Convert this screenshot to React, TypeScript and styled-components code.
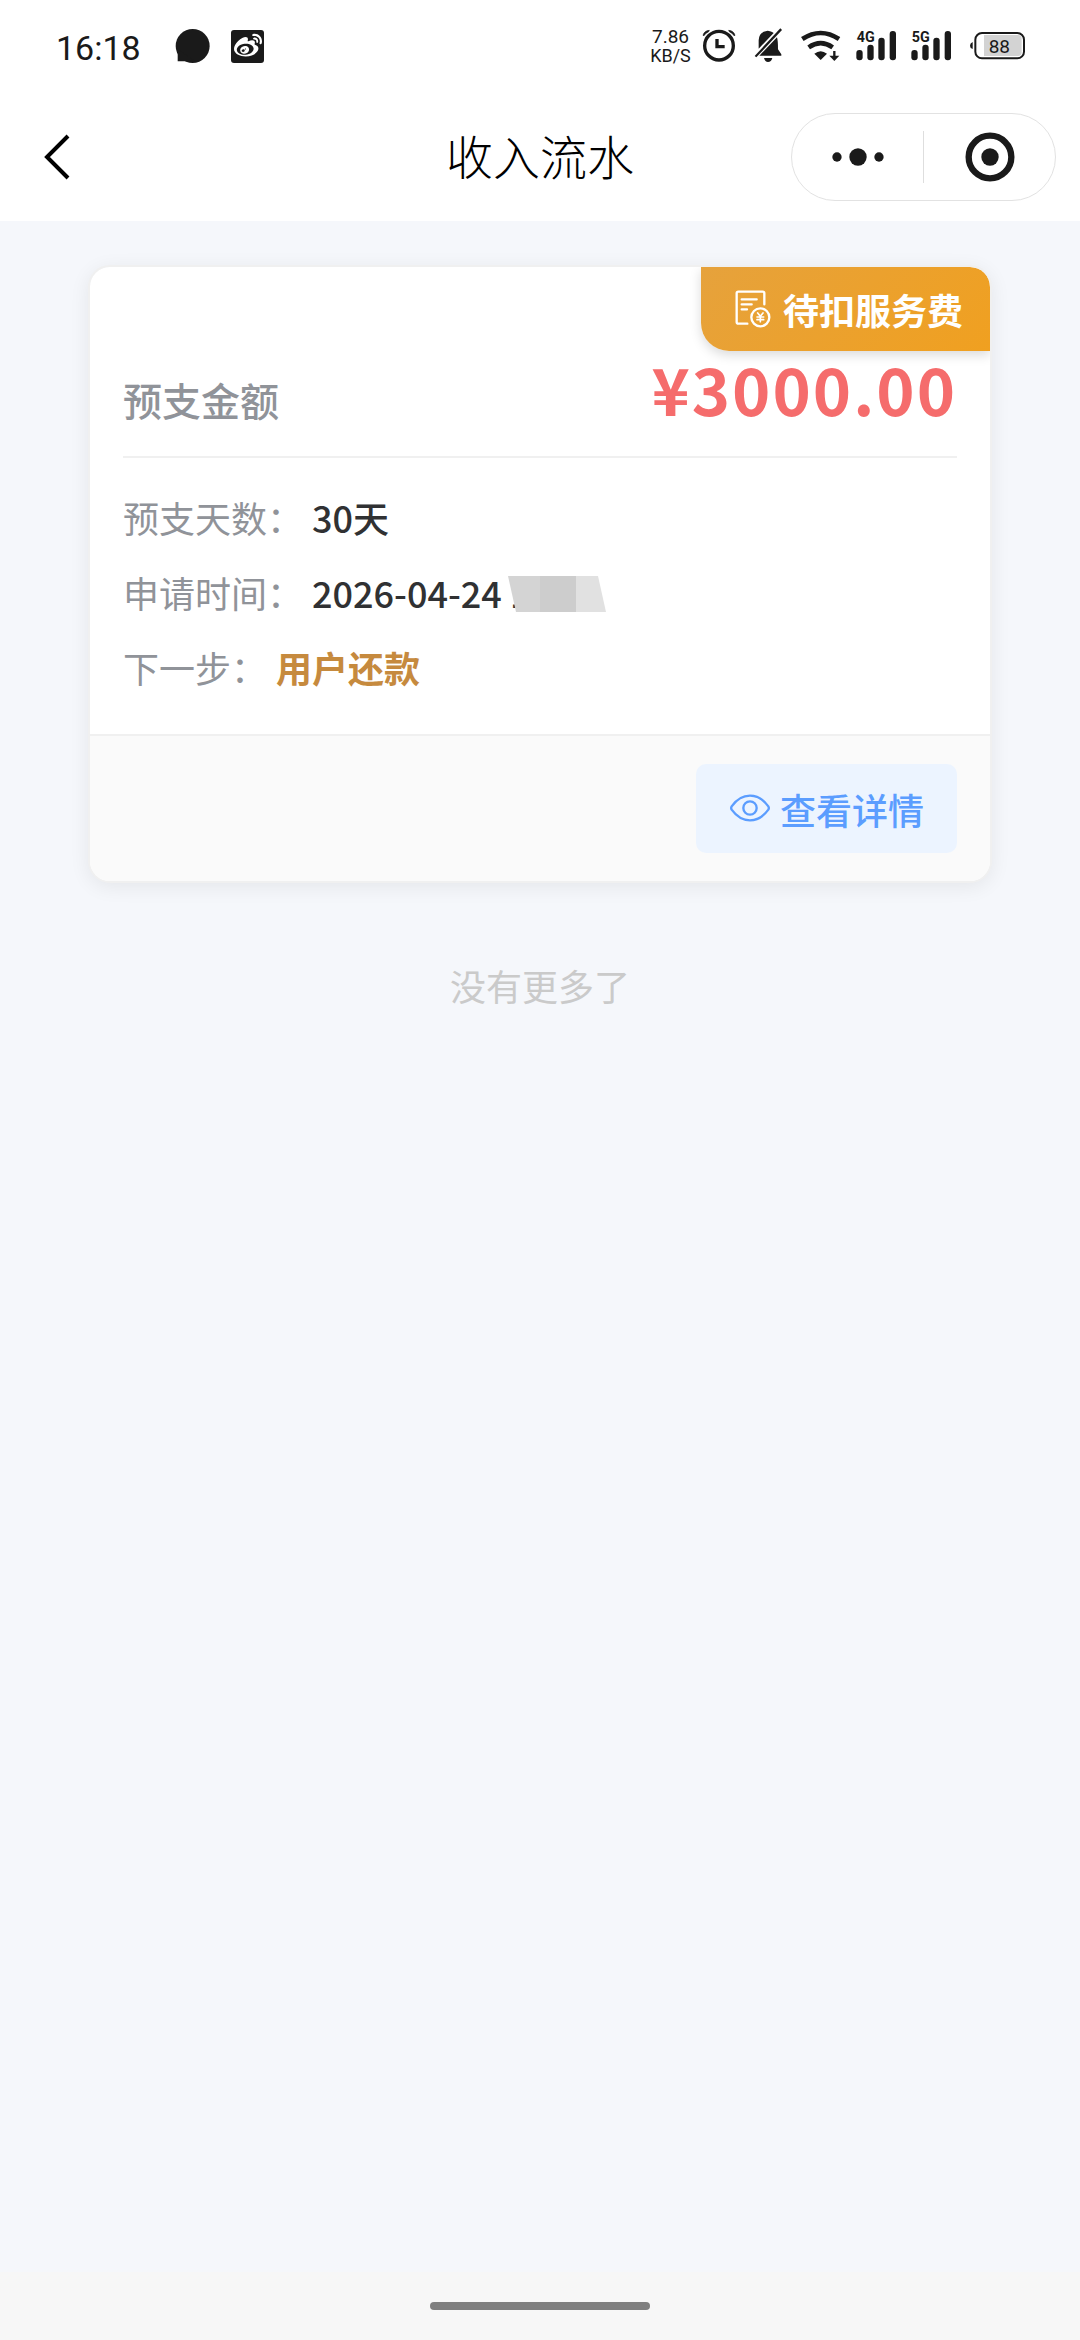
import React from "react";
import styled, { createGlobalStyle } from "styled-components";
import { FaWeibo } from "react-icons/fa";

const ink = "#1a1a1a";
const line = "#f0f0f0";

const GlobalStyle = createGlobalStyle`
  *, *::before, *::after { box-sizing: border-box; }
  body {
    margin: 0;
    background: #f5f7fb;
    font-family: "Noto Sans CJK SC", sans-serif;
  }
  button { font: inherit; border: 0; background: none; padding: 0; cursor: pointer; }
  h1, p, dl, dd, dt { margin: 0; font-weight: inherit; }
  svg { display: block; flex: none; }
`;

const Screen = styled.div`
  display: flex;
  flex-direction: column;
  min-height: 100vh;
`;

const StatusBar = styled.header`
  display: flex;
  justify-content: space-between;
  align-items: center;
  height: 92px;
  padding: 0 54px 0 56px;
  background: #fff;
  color: ${ink};
  font-family: Roboto, sans-serif;
`;

const StatusGroup = styled.div<{ $gap: number }>`
  display: flex;
  align-items: center;
  gap: ${(p) => p.$gap}px;
`;

const Clock = styled.time`
  width: 98px;
  padding-top: 3px;
  font-size: 34px;
  line-height: 40px;
`;

const WeiboTile = styled.span`
  display: grid;
  place-items: center;
  width: 33px;
  height: 33px;
  border-radius: 3px;
  background: ${ink};
  color: #fff;
  font-size: 28px;
`;

const NetSpeed = styled.div`
  width: 43px;
  text-align: center;
  font-size: 18px;
  line-height: 18px;
`;

const SpeedValue = styled.div`
  font-size: 19px;
  line-height: 20px;
`;

const NavBar = styled.nav`
  display: grid;
  grid-template-columns: 1fr auto 1fr;
  align-items: center;
  height: 129px;
  padding: 0 24px;
  background: #fff;
`;

const BackButton = styled.button`
  justify-self: start;
  display: grid;
  place-items: center;
  width: 66px;
  height: 60px;
`;

const Title = styled.h1`
  padding-bottom: 4px;
  font-size: 47px;
  font-weight: 300;
  line-height: 60px;
  color: #000;
`;

const Capsule = styled.div`
  justify-self: end;
  display: flex;
  align-items: center;
  width: 265px;
  height: 88px;
  border: 1px solid #e2e2e2;
  border-radius: 44px;
`;

const CapsuleButton = styled.button`
  flex: 1;
  display: grid;
  place-items: center;
  height: 100%;
`;

const CapsuleRule = styled.span`
  width: 1px;
  height: 52px;
  background: #dedede;
`;

const Content = styled.main`
  flex: 1;
  padding: 44px 88px;
`;

const Card = styled.article`
  position: relative;
  border: 2px solid ${line};
  border-radius: 22px;
  background: #fff;
  background-clip: padding-box;
  box-shadow: 0 4px 20px rgba(0, 0, 0, 0.07);
  overflow: hidden;
`;

const Badge = styled.div`
  position: absolute;
  top: 0;
  right: 0;
  display: flex;
  align-items: center;
  gap: 12px;
  height: 84px;
  padding: 0 27px 0 34px;
  border-radius: 0 20px 0 28px;
  background: linear-gradient(135deg, #e6a23c, #f0a020);
  box-shadow: 0 4px 12px rgba(0, 0, 0, 0.15);
  color: #fff;
  font-size: 36px;
  font-weight: 700;
  line-height: 40px;
`;

const Body = styled.div`
  padding: 0 33px;
`;

const AmountRow = styled.div`
  display: flex;
  justify-content: space-between;
  align-items: baseline;
  padding: 89px 0 32px;
  border-bottom: 2px solid ${line};
`;

const AmountLabel = styled.span`
  font-size: 39px;
  font-weight: 500;
  line-height: 50px;
  color: #909399;
`;

const Amount = styled.span`
  font-size: 65px;
  font-weight: 700;
  line-height: 64px;
  letter-spacing: 2px;
  color: #f56c6c;
`;

const Details = styled.dl`
  display: flex;
  flex-direction: column;
  gap: 25px;
  padding: 34px 0 42px;
`;

const DetailRow = styled.div`
  display: flex;
  gap: 9px;
  font-size: 36px;
  line-height: 50px;
`;

const DetailLabel = styled.dt`
  color: #909399;
`;

const DetailValue = styled.dd<{ $accent?: boolean }>`
  position: relative;
  font-weight: ${(p) => (p.$accent ? 700 : 500)};
  color: ${(p) => (p.$accent ? "#c68a3e" : "#303133")};
`;

const Mosaic = styled.svg`
  position: absolute;
  top: 9px;
  left: 196px;
`;

const CardFooter = styled.footer`
  display: flex;
  justify-content: flex-end;
  padding: 28px 33px;
  border-top: 2px solid ${line};
  background: #fafafa;
`;

const DetailButton = styled.button`
  display: flex;
  align-items: center;
  gap: 9px;
  height: 89px;
  padding: 0 33px;
  border-radius: 10px;
  background: #ecf4ff;
  color: #5b9dff;
  font-size: 36px;
  font-weight: 500;
  line-height: 40px;
`;

const EndNote = styled.p`
  padding: 77px 0;
  text-align: center;
  font-size: 36px;
  line-height: 50px;
  color: #cacaca;
`;

const HomeArea = styled.footer`
  display: grid;
  place-items: center;
  height: 68px;
  background: #f7f7f7;
`;

const HomeBar = styled.span`
  width: 220px;
  height: 8px;
  border-radius: 4px;
  background: #7f7f7f;
`;

function BubbleIcon() {
  return (
    <svg width="35" height="35" viewBox="0 0 105 105" fill={ink} aria-hidden="true">
      <circle cx="53" cy="51" r="51" />
      <path d="M8 60V97H60Z" />
    </svg>
  );
}

function AlarmIcon() {
  return (
    <svg width="35" height="40" viewBox="213 78 105 120" fill="none" stroke={ink} aria-hidden="true">
      <circle cx="264" cy="137" r="43" strokeWidth="10" />
      <path d="M258 117V140H281" strokeWidth="10" />
      <path d="M216 106Q220 92 235 91L233 95Q223 99 219 107ZM312 106Q308 92 293 91L295 95Q305 99 309 107Z" fill={ink} strokeWidth="2" />
    </svg>
  );
}

function MutedBellIcon() {
  return (
    <svg width="41" height="40" viewBox="348 78 123 120" fill={ink} aria-hidden="true">
      <path d="M371 168L448 85L453 90L376 172Z" />
      <path d="M383 146V121Q384 98 404 94Q410 90 417 94Q424 96 428 99Z" />
      <path d="M438 112Q441 121 441 148L451 163V167H385Z" />
      <path d="M399 174H424Q421 186 411 186Q402 186 399 174Z" />
    </svg>
  );
}

function WifiIcon() {
  return (
    <svg width="45" height="40" viewBox="501 78 135 120" fill="none" stroke={ink} aria-hidden="true">
      <path d="M514 117Q569 81 624 117" strokeWidth="14" />
      <path d="M533 142Q569 117 605 142" strokeWidth="14" />
      <path d="M550 161Q569 146 588 161L569 180Z" fill={ink} stroke="none" />
      <path d="M610 153V170" strokeWidth="7" />
      <path d="M595 167H625L610 183Z" fill={ink} stroke="none" />
    </svg>
  );
}

function SignalIcon({ label }: { label: string }) {
  return (
    <svg width="45" height="40" viewBox="666 78 135 120" fill={ink} role="img" aria-label={label}>
      <text x="677" y="126" fontFamily="Roboto, sans-serif" fontSize="43" fontWeight="700">
        {label}
      </text>
      <rect x="676" y="150" width="19" height="31" rx="9" />
      <rect x="709" y="134" width="19" height="47" rx="9" />
      <rect x="742" y="113" width="19" height="68" rx="9" />
      <rect x="776" y="93" width="19" height="88" rx="9" />
    </svg>
  );
}

function BatteryIcon() {
  return (
    <svg width="63" height="40" viewBox="999 78 189 120" role="img" aria-label="88%">
      <path d="M1028 126Q1020 129 1020 137T1028 147Z" fill={ink} />
      <rect x="1036" y="99" width="146" height="76" rx="20" fill="#fff" stroke={ink} strokeWidth="6" />
      <path d="M1062 105H1164Q1175 105 1175 116V157Q1175 168 1164 168H1062Z" fill="#d3d3d3" />
      <text x="1108" y="158" textAnchor="middle" fontFamily="Roboto, sans-serif" fontSize="57" fill={ink}>
        88
      </text>
    </svg>
  );
}

function FeeIcon() {
  return (
    <svg width="36" height="40" viewBox="286 149 108 120" fill="none" stroke="#fff" strokeWidth="7" strokeLinecap="round" strokeLinejoin="round" aria-hidden="true">
      <path d="M374 195V162Q374 157 369 157H296Q291 157 291 162V248Q291 253 296 253H323" />
      <path d="M306 180H351M306 195H336M306 210H322" />
      <circle cx="362" cy="234" r="27" />
      <path d="M354 221L362 231L370 221M362 232V247M352 233H372M352 241H372" strokeWidth="5" />
    </svg>
  );
}

function EyeIcon() {
  return (
    <svg width="42" height="42" viewBox="270 262 126 126" fill="none" stroke="currentColor" strokeWidth="7" aria-hidden="true">
      <path d="M278 317Q301 285 333 285T388 317Q391 322 388 327Q365 359 333 359T278 327Q275 322 278 317Z" />
      <circle cx="333" cy="322" r="20" />
    </svg>
  );
}

export default function App() {
  return (
    <Screen>
      <GlobalStyle />
      <StatusBar>
        <StatusGroup $gap={21}>
          <Clock>16:18</Clock>
          <BubbleIcon />
          <WeiboTile>
            <FaWeibo />
          </WeiboTile>
        </StatusGroup>
        <StatusGroup $gap={10}>
          <NetSpeed>
            <SpeedValue>7.86</SpeedValue>
            KB/S
          </NetSpeed>
          <AlarmIcon />
          <MutedBellIcon />
          <WifiIcon />
          <SignalIcon label="4G" />
          <SignalIcon label="5G" />
          <BatteryIcon />
        </StatusGroup>
      </StatusBar>
      <NavBar>
        <BackButton aria-label="返回">
          <svg width="26" height="48" viewBox="0 0 26 48" fill="none" stroke="#000" strokeWidth="4" aria-hidden="true">
            <path d="M24 3L3 24L24 45" />
          </svg>
        </BackButton>
        <Title>收入流水</Title>
        <Capsule>
          <CapsuleButton aria-label="更多">
            <svg width="52" height="18" viewBox="0 0 156 54" fill={ink} aria-hidden="true">
              <circle cx="15" cy="27" r="14" />
              <circle cx="78" cy="27" r="26" />
              <circle cx="141" cy="27" r="14" />
            </svg>
          </CapsuleButton>
          <CapsuleRule />
          <CapsuleButton aria-label="关闭">
            <svg width="50" height="50" viewBox="0 0 150 150" aria-hidden="true">
              <circle cx="75" cy="75" r="64" fill="none" stroke={ink} strokeWidth="19" />
              <circle cx="75" cy="75" r="26" fill={ink} />
            </svg>
          </CapsuleButton>
        </Capsule>
      </NavBar>
      <Content>
        <Card>
          <Badge>
            <FeeIcon />
            待扣服务费
          </Badge>
          <Body>
            <AmountRow>
              <AmountLabel>预支金额</AmountLabel>
              <Amount>¥3000.00</Amount>
            </AmountRow>
            <Details>
              <DetailRow>
                <DetailLabel>预支天数：</DetailLabel>
                <DetailValue>30天</DetailValue>
              </DetailRow>
              <DetailRow>
                <DetailLabel>申请时间：</DetailLabel>
                <DetailValue>
                  2026-04-24 1
                  <Mosaic width="98" height="36" viewBox="0 0 98 36" aria-hidden="true">
                    <path d="M0 0H33V36H8Z" fill="#d4d4d4" />
                    <path d="M32 0H68V36H32Z" fill="#cdcdcd" />
                    <path d="M68 0H90L98 36H68Z" fill="#e1e1e1" />
                  </Mosaic>
                </DetailValue>
              </DetailRow>
              <DetailRow>
                <DetailLabel>下一步：</DetailLabel>
                <DetailValue $accent>用户还款</DetailValue>
              </DetailRow>
            </Details>
          </Body>
          <CardFooter>
            <DetailButton>
              <EyeIcon />
              查看详情
            </DetailButton>
          </CardFooter>
        </Card>
        <EndNote>没有更多了</EndNote>
      </Content>
      <HomeArea>
        <HomeBar />
      </HomeArea>
    </Screen>
  );
}
